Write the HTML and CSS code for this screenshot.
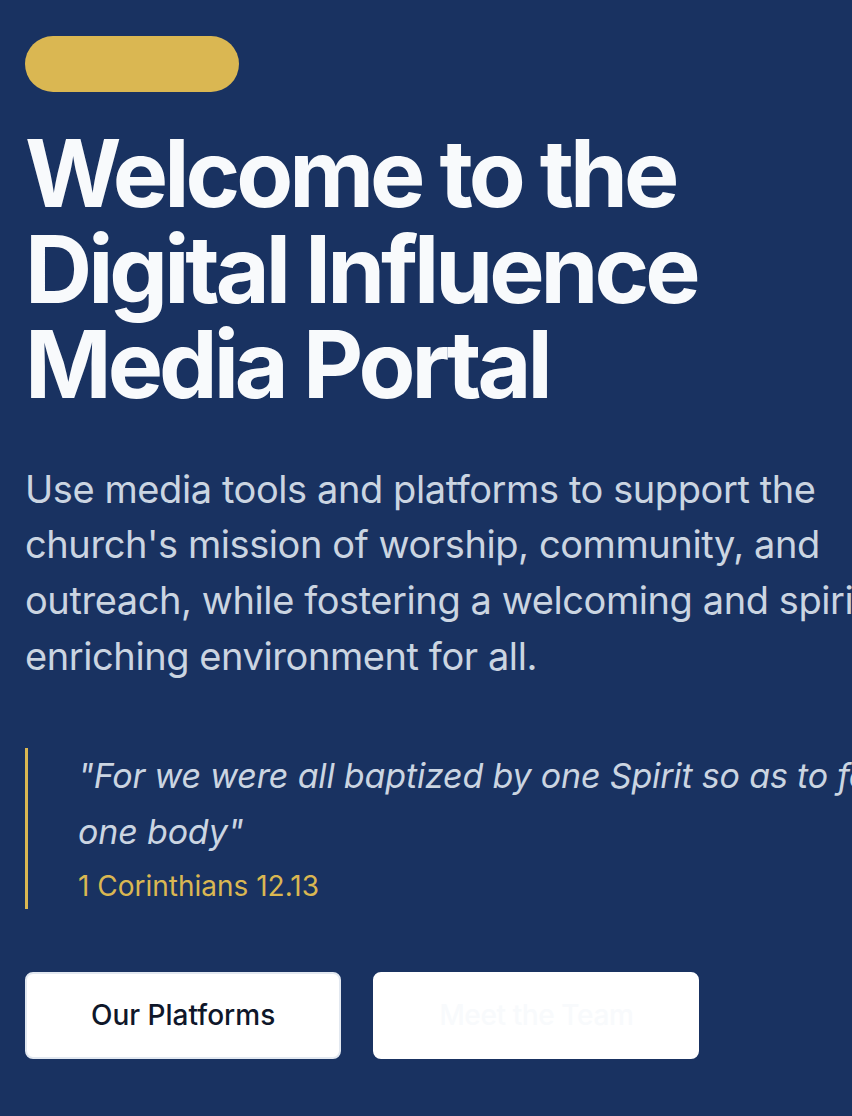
FILE: index.html
```html
<!DOCTYPE html>
<html lang="en">
<head>
<meta charset="utf-8">
<title>Digital Influence Media Portal</title>
<link rel="stylesheet" href="styles.css">
</head>
<body>
<section class="hero">
  <div class="hero-inner">
    <span class="badge"></span>
    <h1 class="title">Welcome to the Digital Influence Media Portal</h1>
    <p class="lead">Use media tools and platforms to support the church's mission of worship, community, and outreach, while fostering a welcoming and spiritually enriching environment for all.</p>
    <blockquote class="verse">
      <p class="verse-text">"For we were all baptized by one Spirit so as to form one body"</p>
      <cite class="verse-ref">1 Corinthians 12.13</cite>
    </blockquote>
    <div class="actions">
      <a class="btn btn-primary" href="#">Our Platforms</a>
      <a class="btn btn-secondary" href="#">Meet the Team</a>
    </div>
  </div>
</section>
</body>
</html>
```

FILE: styles.css
```css
html, body {
  margin: 0;
  padding: 0;
}
body {
  background: #193261;
  font-family: Inter, "Noto Sans", sans-serif;
  overflow: hidden;
}
.hero {
  min-height: 1116px;
  background: #193261;
}
.hero-inner {
  padding: 36px 0 0 25px;
  width: 1000px;
  display: flex;
  flex-direction: column;
  align-items: flex-start;
}
.badge {
  display: block;
  width: 214px;
  height: 56px;
  border-radius: 28px;
  background: #dab752;
}
.title {
  margin: 34px 0 0;
  font-size: 93px;
  line-height: 95.5px;
  font-weight: 700;
  letter-spacing: -0.043em;
  color: #f8fafc;
  max-width: 760px;
}
.lead {
  margin: 49px 0 0;
  font-size: 38px;
  line-height: 55.7px;
  letter-spacing: -0.011em;
  color: #cbd5e1;
  max-width: 940px;
}
.verse {
  margin: 64px 0 0;
  padding: 0 0 5px 50px;
  border-left: 3px solid #dab752;
}
.verse-text {
  margin: 0;
  font-size: 34px;
  line-height: 56px;
  font-style: italic;
  letter-spacing: -0.005em;
  color: #cbd5e1;
  max-width: 850px;
}
.verse-ref {
  display: block;
  margin-top: 8px;
  font-size: 28px;
  line-height: 36px;
  font-style: normal;
  color: #dab752;
}
.actions {
  margin-top: 63px;
  display: flex;
  gap: 32px;
}
.btn {
  display: block;
  padding: 0 64px;
  height: 87px;
  line-height: 83px;
  border-radius: 8px;
  font-size: 28px;
  font-weight: 500;
  text-decoration: none;
  box-sizing: border-box;
  background: #ffffff;
}
.btn-primary {
  color: #0f172a;
  border: 2px solid #e2e8f0;
}
.btn-secondary {
  color: #f8fafc;
  border: 2px solid #ffffff;
  letter-spacing: -0.4px;
}
```
